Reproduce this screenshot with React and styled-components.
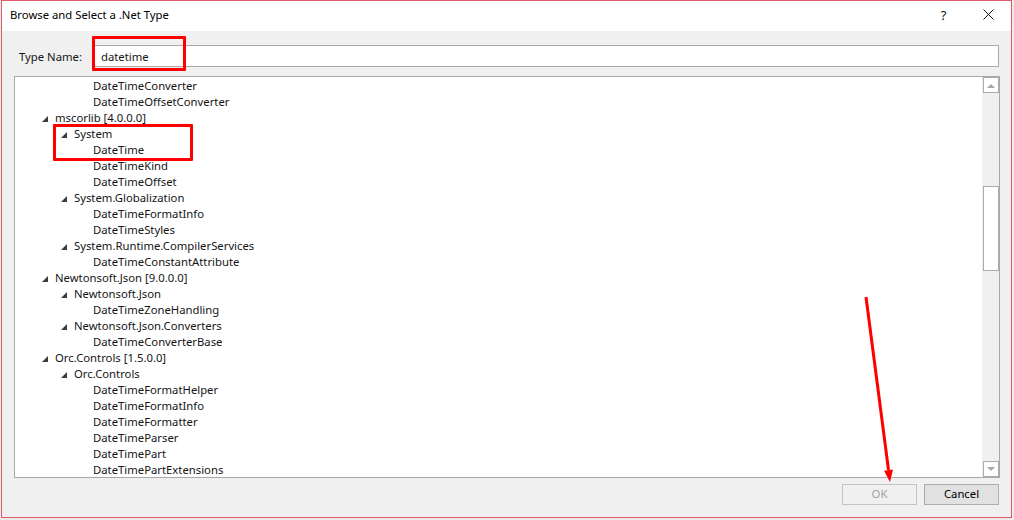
import React from "react";
import styled, { createGlobalStyle } from "styled-components";

const GlobalStyle = createGlobalStyle`
  html, body {
    margin: 0;
    padding: 0;
    background: #ebebeb;
    font-family: "Segoe UI", "Noto Sans", sans-serif;
    font-size: 11.3px;
    color: #151515;
  }
`;

const Page = styled.div`
  position: relative;
  width: 1014px;
  height: 520px;
  padding-left: 1px;
  box-sizing: border-box;
  overflow: hidden;
`;

const Dialog = styled.div`
  width: 1011px;
  height: 518px;
  box-sizing: border-box;
  border: 1px solid #e25a68;
  background: #f0f0f0;
  display: flex;
  flex-direction: column;
`;

const TitleBar = styled.div`
  height: 30px;
  box-sizing: border-box;
  padding: 0 0 3px 8px;
  background: #fff;
  display: flex;
  align-items: center;
`;

const Title = styled.div`
  flex: 1;
  color: #000;
`;

const TitleButton = styled.div`
  width: 45px;
  display: flex;
  justify-content: center;
  font-size: ${(p) => p.$size || 13}px;
  color: #111;
`;

const Body = styled.div`
  flex: 1;
  display: flex;
  flex-direction: column;
  padding: 14px 11px 0 12px;
`;

const TypeRow = styled.div`
  display: flex;
  align-items: center;
  padding-left: 5px;
`;

const Label = styled.label`
  width: 74px;
  padding-top: 1px;
`;

const Input = styled.div`
  flex: 1;
  height: 22px;
  box-sizing: border-box;
  border: 1px solid #a9a9a9;
  background: #fff;
  padding: 1px 0 0 7px;
  line-height: 19px;
  margin-right: 1px;
`;

const Tree = styled.div`
  margin-top: 9px;
  height: 402px;
  box-sizing: border-box;
  border: 1px solid #a9a9a9;
  background: #fff;
  display: flex;
`;

const Rows = styled.div`
  flex: 1;
  overflow: hidden;
  padding-top: 1px;
`;

const Row = styled.div`
  height: 16px;
  line-height: 16px;
  display: flex;
  align-items: center;
  padding-left: ${(p) => 21 + p.$level * 19}px;
  white-space: nowrap;
`;

const Expander = styled.span`
  width: 19px;
  height: 16px;
  display: flex;
  align-items: center;
  padding-left: 6px;
  box-sizing: border-box;
  padding-top: 2px;
`;

const Scrollbar = styled.div`
  width: 17px;
  background: #f0f0f0;
  display: flex;
  flex-direction: column;
  align-items: center;
`;

const ScrollButton = styled.div`
  width: 16px;
  height: 16px;
  box-sizing: border-box;
  border: 1px solid #ababab;
  background: #fff;
  display: flex;
  align-items: center;
  justify-content: center;
`;

const Track = styled.div`
  flex: 1;
  display: flex;
  flex-direction: column;
  padding-top: 93px;
`;

const Thumb = styled.div`
  width: 16px;
  height: 85px;
  box-sizing: border-box;
  border: 1px solid #ababab;
  background: #fff;
`;

const Footer = styled.div`
  display: flex;
  justify-content: flex-end;
  gap: 7px;
  margin-top: 6px;
  padding-right: 1px;
`;

const Button = styled.button`
  width: 75px;
  height: 21px;
  box-sizing: border-box;
  font-family: inherit;
  font-size: 11.3px;
  padding: 0 0 2px;
  border: 1px solid ${(p) => (p.disabled ? "#c4c4c4" : "#adadad")};
  background: ${(p) => (p.disabled ? "#f0f0f0" : "#e1e1e1")};
  color: ${(p) => (p.disabled ? "#a2a2a2" : "#000")};
`;

const Annotation = styled.div`
  position: absolute;
  left: ${(p) => p.$x}px;
  top: ${(p) => p.$y}px;
  width: ${(p) => p.$w}px;
  height: ${(p) => p.$h}px;
  box-sizing: border-box;
  border: 3px solid #ff0000;
  border-radius: 1px;
  pointer-events: none;
`;

const ArrowLayer = styled.svg`
  position: absolute;
  left: 0;
  top: 0;
  pointer-events: none;
`;

const rows = [
  { level: 2, text: "DateTimeConverter" },
  { level: 2, text: "DateTimeOffsetConverter" },
  { level: 0, text: "mscorlib [4.0.0.0]", open: true },
  { level: 1, text: "System", open: true },
  { level: 2, text: "DateTime" },
  { level: 2, text: "DateTimeKind" },
  { level: 2, text: "DateTimeOffset" },
  { level: 1, text: "System.Globalization", open: true },
  { level: 2, text: "DateTimeFormatInfo" },
  { level: 2, text: "DateTimeStyles" },
  { level: 1, text: "System.Runtime.CompilerServices", open: true },
  { level: 2, text: "DateTimeConstantAttribute" },
  { level: 0, text: "Newtonsoft.Json [9.0.0.0]", open: true },
  { level: 1, text: "Newtonsoft.Json", open: true },
  { level: 2, text: "DateTimeZoneHandling" },
  { level: 1, text: "Newtonsoft.Json.Converters", open: true },
  { level: 2, text: "DateTimeConverterBase" },
  { level: 0, text: "Orc.Controls [1.5.0.0]", open: true },
  { level: 1, text: "Orc.Controls", open: true },
  { level: 2, text: "DateTimeFormatHelper" },
  { level: 2, text: "DateTimeFormatInfo" },
  { level: 2, text: "DateTimeFormatter" },
  { level: 2, text: "DateTimeParser" },
  { level: 2, text: "DateTimePart" },
  { level: 2, text: "DateTimePartExtensions" },
];

const OpenGlyph = () => (
  <svg width="6" height="6" viewBox="0 0 6 6">
    <polygon points="6,0 6,6 0,6" fill="#3c3c3c" />
  </svg>
);

const ScrollArrow = ({ down }) => (
  <svg width="8" height="5" viewBox="0 0 8 5">
    <polygon points={down ? "0,0 8,0 4,4" : "0,5 8,5 4,1"} fill="#a8a8a8" />
  </svg>
);

const CloseGlyph = () => (
  <svg width="11" height="11" viewBox="0 0 11 11">
    <path d="M0.5 0.5 L10.5 10.5 M10.5 0.5 L0.5 10.5" stroke="#111" strokeWidth="1" fill="none" />
  </svg>
);

export default function App() {
  return (
    <>
      <GlobalStyle />
      <Page>
        <Dialog>
          <TitleBar>
            <Title>Browse and Select a .Net Type</Title>
            <TitleButton $size={13}>?</TitleButton>
            <TitleButton>
              <CloseGlyph />
            </TitleButton>
          </TitleBar>
          <Body>
            <TypeRow>
              <Label>Type Name:</Label>
              <Input>datetime</Input>
            </TypeRow>
            <Tree>
              <Rows>
                {rows.map((r, i) => (
                  <Row key={i} $level={r.level}>
                    <Expander>{r.open && <OpenGlyph />}</Expander>
                    {r.text}
                  </Row>
                ))}
              </Rows>
              <Scrollbar>
                <ScrollButton>
                  <ScrollArrow />
                </ScrollButton>
                <Track>
                  <Thumb />
                </Track>
                <ScrollButton>
                  <ScrollArrow down />
                </ScrollButton>
              </Scrollbar>
            </Tree>
            <Footer>
              <Button disabled>OK</Button>
              <Button>Cancel</Button>
            </Footer>
          </Body>
        </Dialog>
        <Annotation $x={92} $y={36} $w={94} $h={35} />
        <Annotation $x={53} $y={124} $w={140} $h={37} />
        <ArrowLayer width="1014" height="520">
          <line x1="866" y1="297" x2="888.5" y2="470" stroke="#ff0000" strokeWidth="3" />
          <polygon points="884,470.7 893,469.5 890,482" fill="#ff0000" />
        </ArrowLayer>
      </Page>
    </>
  );
}
